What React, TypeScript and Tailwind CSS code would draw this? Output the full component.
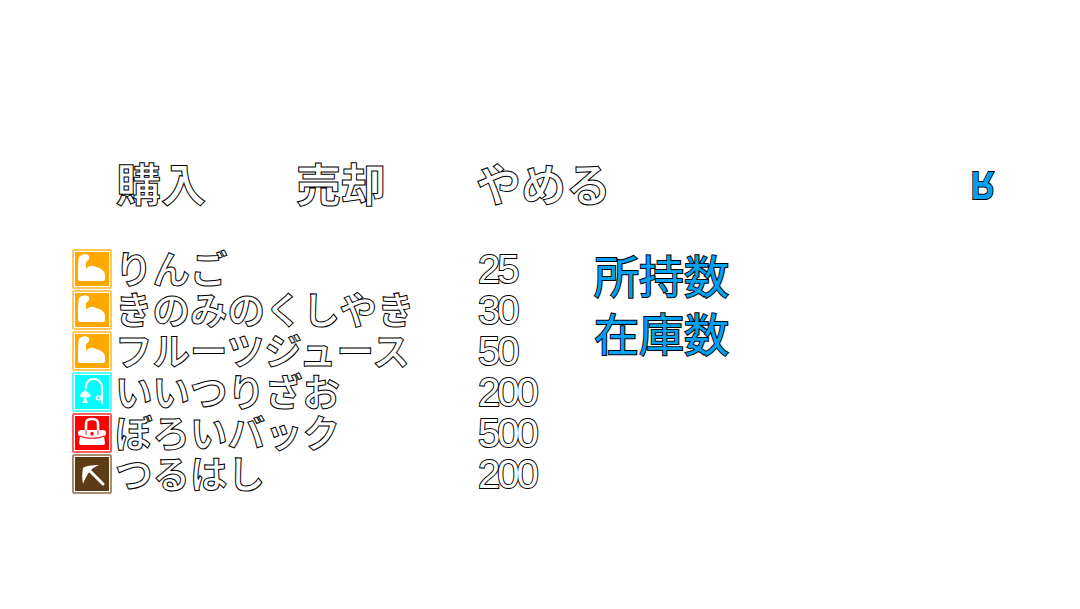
import React from 'react';

const cjk = { fontFamily: '"Noto Sans CJK JP", sans-serif' };

// Heavy white glyphs with a hairline black outline
const outline = 'font-bold text-white [-webkit-text-stroke:1px_#000]';
const digits = 'text-white [-webkit-text-stroke:2px_#000] [paint-order:stroke_fill]';
const blueOutline = 'text-[#00a0f0] [-webkit-text-stroke:2px_#000] [paint-order:stroke_fill]';

type IconKind = 'arm' | 'rod' | 'bag' | 'pick';

const frames: Record<IconKind, string> = {
  arm: 'bg-[#ffa800] border-[#ffc75c]',
  rod: 'bg-[#00ffff] border-[#5cffff]',
  bag: 'bg-[#ff0000] border-[#ff5c5c]',
  pick: 'bg-[#5c3c14] border-[#a88c6c]',
};

const ItemIcon = ({ kind }: { kind: IconKind }) => (
  <div className={`w-10 h-10 shrink-0 rounded-[2px] border-2 outline outline-1 -outline-offset-3 outline-white ${frames[kind]}`}>
    <svg viewBox="0 0 36 36" className="w-full h-full">
      {kind === 'arm' && (
        <path
          d="M4 28 C4 20 4 10 5 6 C7 3 13 2 15 5 C16 8 14 10 12 11 L12 18 C15 14 19 14 22 16 C27 17 31 20 31 24 L31 28 C31 29 30 30 29 30 L6 30 C5 30 4 29 4 28 Z"
          fill="#fff"
        />
      )}
      {kind === 'rod' && (
        <g fill="none" stroke="#fff" strokeWidth="2.2">
          <path d="M12 15 L12 13 C12 8 15 5 20 5 C25 5 28 9 28 14 L28 30" />
          <circle cx="24.5" cy="24" r="2" strokeWidth="1.6" />
          <path d="M11 16 C8 18 6 20 6 22 C8 24 14 24 17 22 C16 20 14 18 11 16 Z" fill="#fff" stroke="none" />
          <path d="M11 23 L8 29 L14 29 Z" fill="#fff" stroke="none" />
        </g>
      )}
      {kind === 'bag' && (
        <g>
          <path d="M12 17 L12 9 C12 5 14 4 18 4 C22 4 24 5 24 9 L24 17" fill="none" stroke="#fff" strokeWidth="2.6" />
          <path d="M4 18 C4 15 6 15 8 15 L28 15 C30 15 32 15 32 18 C32 20 31 21 30 21 L31 28 C31 29 30 30 29 30 L7 30 C6 30 5 29 5 28 L6 21 C5 21 4 20 4 18 Z" fill="#fff" />
          <path d="M6 21 C12 24 24 24 30 21" fill="none" stroke="#ff0000" strokeWidth="1.2" />
          <path d="M12 15 L12 20 M24 15 L24 20" stroke="#ff0000" strokeWidth="0.8" />
          <rect x="16.5" y="17" width="3" height="3.5" rx="1" fill="#ff0000" />
        </g>
      )}
      {kind === 'pick' && (
        <g fill="#fff">
          <path d="M25 9 C18 9 11 10 9 12 C8 16 8 24 9 28 C11 23 13 18 17 14 C19 12 22 10 25 9 Z" />
          <path d="M14 13 L29 28" fill="none" stroke="#fff" strokeWidth="3" strokeLinecap="round" />
        </g>
      )}
    </svg>
  </div>
);

const items: { kind: IconKind; name: string; price: number }[] = [
  { kind: 'arm', name: 'りんご', price: 25 },
  { kind: 'arm', name: 'きのみのくしやき', price: 30 },
  { kind: 'arm', name: 'フルーツジュース', price: 50 },
  { kind: 'rod', name: 'いいつりざお', price: 200 },
  { kind: 'bag', name: 'ぼろいバック', price: 500 },
  { kind: 'pick', name: 'つるはし', price: 200 },
];

export default function App() {
  return (
    <div className="w-[1080px] h-[609px] bg-white overflow-hidden pt-[155px] pl-[72px]" style={cjk}>
      {/* command row */}
      <div className={`flex items-center h-[54px] pl-[44px] text-[45px] leading-none ${outline}`}>
        <span className="w-[180px]">購入</span>
        <span className="w-[180px]">売却</span>
        <span className="w-[493px]">やめる</span>
        <span
          className={`mt-[6px] scale-x-[0.85] -scale-y-100 text-[38px] leading-none font-bold ${blueOutline}`}
          style={{ fontFamily: '"Liberation Sans", sans-serif' }}
        >
          R
        </span>
      </div>

      <div className="flex mt-[39px]">
        {/* shop list */}
        <div className="flex flex-col w-[522px]">
          {items.map((item) => (
            <div key={item.name} className="flex items-center h-[41px]">
              <ItemIcon kind={item.kind} />
              <span className={`w-[366px] pl-[3px] pb-[4px] text-[37.5px] leading-none whitespace-nowrap ${outline}`}>{item.name}</span>
              <span
                className={`text-[40px] leading-none tracking-[-3px] ${digits}`}
                style={{ fontFamily: '"Liberation Sans", sans-serif' }}
              >
                {item.price}
              </span>
            </div>
          ))}
        </div>

        {/* stock */}
        <div className={`flex flex-col gap-[13px] pt-[4px] text-[45px] leading-[45px] ${blueOutline}`}>
          <span>所持数</span>
          <span>在庫数</span>
        </div>
      </div>
    </div>
  );
}
